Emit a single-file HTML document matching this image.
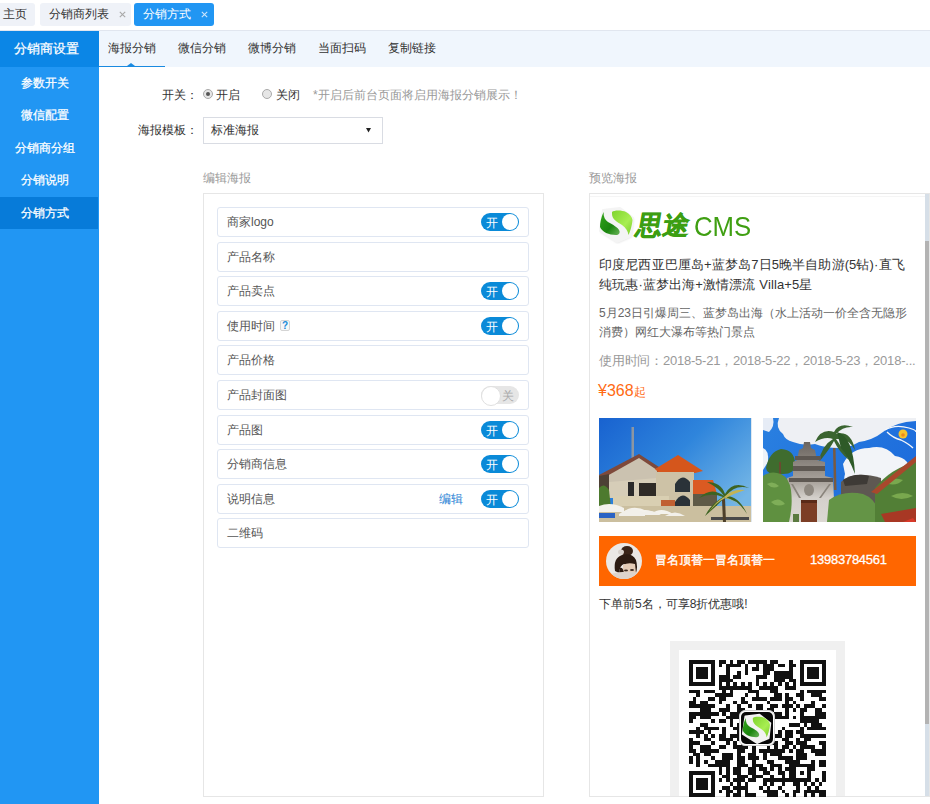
<!DOCTYPE html>
<html><head><meta charset="utf-8">
<style>
*{box-sizing:border-box;margin:0;padding:0}
html,body{width:930px;height:804px;overflow:hidden;background:#fff;font-family:"Liberation Sans",sans-serif;color:#333}
.a{position:absolute;white-space:nowrap}
.tab{position:absolute;top:3px;height:23px;border-radius:3px;background:#eff2f8;font-size:12px;line-height:23px;color:#333}
.tab .x{position:absolute;top:0;font-size:11px;color:#aaa}
.side{position:absolute;left:0;top:31px;width:99px;height:773px;background:#2196f3}
.sh{position:absolute;left:0;top:0;width:99px;padding-right:7px;height:36px;background:#0b86e6;color:#fff;font-size:13px;line-height:36px;text-align:center;-webkit-text-stroke:0.25px #fff}
.si{position:absolute;left:0;width:99px;padding-right:9px;height:32px;color:#fff;font-size:12px;line-height:32px;text-align:center;-webkit-text-stroke:0.25px #fff}
.nav{position:absolute;left:99px;top:31px;width:831px;height:36px;background:#f0f6fd}
.nt{position:absolute;top:0;height:36px;line-height:35px;font-size:12px;color:#333}
.row{position:absolute;left:217px;width:312px;height:30px;border:1px solid #dfe6f2;border-radius:3px;font-size:12px;line-height:28px;color:#555;padding-left:9px}
.sw{position:absolute;left:263px;top:5px;width:38px;height:18px;border-radius:9px;background:#0a8ad8}
.sw:after{content:"";position:absolute;right:1px;top:1px;width:16px;height:16px;border-radius:50%;background:#fff}
.sw span{position:absolute;left:5px;top:1px;line-height:18px;font-size:12px;color:#fff}
.sw.off{background:#e6e6e6}
.sw.off:after{left:0;right:auto;top:0;width:18px;height:18px;border:1px solid #e0e0e0}
.sw.off span{left:auto;right:5px;color:#aaa}
</style></head><body>
<!-- top tabs -->
<div style="position:absolute;left:0;top:30px;width:930px;height:1px;background:#e1e6ef"></div>
<div class="tab" style="left:-6px;width:41px;padding-left:9px">主页</div>
<div class="tab" style="left:40px;width:91px;padding-left:9px">分销商列表<svg style="position:absolute;left:79px;top:8px" width="7" height="7" viewBox="0 0 7 7"><path d="M0.8 0.8L6.2 6.2M6.2 0.8L0.8 6.2" stroke="#a8a8a8" stroke-width="1.1"/></svg></div>
<div class="tab" style="left:134px;width:80px;padding-left:9px;background:#2196f3;color:#fff">分销方式<svg style="position:absolute;left:67px;top:8px" width="7" height="7" viewBox="0 0 7 7"><path d="M0.8 0.8L6.2 6.2M6.2 0.8L0.8 6.2" stroke="#cde5fb" stroke-width="1.1"/></svg></div>
<!-- sidebar -->
<div class="side">
 <div class="sh">分销商设置</div>
 <div class="si" style="top:36px">参数开关</div>
 <div class="si" style="top:68px">微信配置</div>
 <div class="si" style="top:101px">分销商分组</div>
 <div class="si" style="top:133px">分销说明</div>
 <div class="si" style="top:166px;width:98px;padding-right:8px;background:#077bd9">分销方式</div>
</div>
<!-- nav -->
<div class="nav">
 <div class="nt" style="left:9px">海报分销</div>
 <div style="position:absolute;left:0;top:35px;width:66px;height:1px;background:#1a8ae0"></div>
 <div style="position:absolute;left:28px;top:32px;width:0;height:0;border-left:4px solid transparent;border-right:4px solid transparent;border-bottom:3px solid #1a8ae0"></div>
 <div class="nt" style="left:79px">微信分销</div>
 <div class="nt" style="left:149px">微博分销</div>
 <div class="nt" style="left:219px">当面扫码</div>
 <div class="nt" style="left:289px">复制链接</div>
</div>
<!-- form -->
<div class="a" style="left:162px;top:88px;font-size:12px;line-height:14px">开关：</div>
<div class="a" style="left:203px;top:89px;width:10px;height:10px;border:1px solid #aaa;border-radius:50%;background:#e6e6e6"><div style="position:absolute;left:2px;top:2px;width:4px;height:4px;border-radius:50%;background:#555"></div></div>
<div class="a" style="left:216px;top:88px;font-size:12px;line-height:14px">开启</div>
<div class="a" style="left:262px;top:89px;width:10px;height:10px;border:1px solid #aaa;border-radius:50%;background:#e6e6e6"></div>
<div class="a" style="left:276px;top:88px;font-size:12px;line-height:14px">关闭</div>
<div class="a" style="left:313px;top:88px;font-size:12px;line-height:14px;color:#999">*开启后前台页面将启用海报分销展示！</div>
<div class="a" style="left:138px;top:123px;font-size:12px;line-height:14px">海报模板：</div>
<div class="a" style="left:203px;top:117px;width:180px;height:27px;border:1px solid #d9dce3;font-size:12px;line-height:25px;padding-left:7px">标准海报<svg style="position:absolute;left:162px;top:10px" width="5" height="5" viewBox="0 0 5 5"><path d="M0 0H5L2.5 4.5Z" fill="#222"/></svg></div>
<div class="a" style="left:203px;top:171px;font-size:12px;line-height:14px;color:#999">编辑海报</div>
<div class="a" style="left:589px;top:171px;font-size:12px;line-height:14px;color:#999">预览海报</div>
<!-- edit panel -->
<div class="a" style="left:203px;top:193px;width:341px;height:604px;border:1px solid #e6e6e6"></div>
<div class="row" style="top:207px">商家logo<div class="sw"><span>开</span></div></div>
<div class="row" style="top:242px">产品名称</div>
<div class="row" style="top:276px">产品卖点<div class="sw"><span>开</span></div></div>
<div class="row" style="top:311px">使用时间<span style="position:absolute;left:62px;top:8px;width:10px;height:11px;border:1px solid #d4d4d4;border-radius:2px;background:#f7f7f7;font-size:10px;line-height:9px;text-align:center;color:#1a8ad8;font-weight:bold">?</span><div class="sw"><span>开</span></div></div>
<div class="row" style="top:345px">产品价格</div>
<div class="row" style="top:380px">产品封面图<div class="sw off"><span>关</span></div></div>
<div class="row" style="top:415px">产品图<div class="sw"><span>开</span></div></div>
<div class="row" style="top:449px">分销商信息<div class="sw"><span>开</span></div></div>
<div class="row" style="top:484px">说明信息<span style="position:absolute;left:221px;color:#1e7fd4">编辑</span><div class="sw"><span>开</span></div></div>
<div class="row" style="top:518px">二维码</div>
<!-- preview panel -->
<div class="a" style="left:589px;top:193px;width:341px;height:604px;border:1px solid #e6e6e6"></div>
<div class="a" style="left:590px;top:196px;width:335px;height:1px;background:#f5f5f5"></div>
<div class="a" style="left:925px;top:194px;width:4px;height:602px;background:#d6dfe8"><div style="position:absolute;left:0;top:47px;width:4px;height:483px;background:#b3b3b3"></div></div>

<!-- preview content -->
<svg class="a" style="left:596px;top:204px" width="42" height="40" viewBox="0 0 42 40">
 <defs>
  <linearGradient id="dg" x1="0" y1="0" x2="1" y2="1"><stop offset="0" stop-color="#34a51c"/><stop offset="0.6" stop-color="#1b850f"/><stop offset="1" stop-color="#6ab45a"/></linearGradient>
  <linearGradient id="lg" x1="0" y1="0" x2="1" y2="1"><stop offset="0" stop-color="#7fd42e"/><stop offset="0.6" stop-color="#a8ee52"/><stop offset="1" stop-color="#79cc2a"/></linearGradient>
  <filter id="sh" x="-20%" y="-20%" width="140%" height="140%"><feGaussianBlur stdDeviation="1"/></filter>
 </defs>
 <path d="M7 6 L24 4 L37 14 L35 32 L21 38 L4 27 Z" fill="#dcdcdc" filter="url(#sh)" transform="translate(0.5,1)"/>
 <path d="M7 6 L24 4 L37 14 L35 32 L21 38 L4 27 Z" fill="#f4f4f4" stroke="#f4f4f4" stroke-width="2" stroke-linejoin="round"/>
 <path d="M7.5 8 C5 14 4 19 4 23 C6 28 13 31 20 31 C23 31 24 29 23.5 27 C22 23 17 21 12 18 C9 16 7.5 13 7.5 8 Z" fill="url(#dg)"/>
 <path d="M16 8 C18 6 26 6 30 8 C34 10 36 13 36.5 16 C36 22 34 28 32.5 31 C32 27 30 24 26 21 C21 18 16 15 16 10 Z" fill="url(#lg)"/>
</svg>
<div class="a" style="left:634px;top:208px;font-size:26px;line-height:34px;color:#3c9e12;font-weight:bold;-webkit-text-stroke:0.6px #3c9e12;transform:skewX(-10deg);transform-origin:0 100%;letter-spacing:1px">思途</div>
<div class="a" style="left:694px;top:210px;font-size:28px;line-height:34px;color:#3f9f12;transform:scaleX(0.92);transform-origin:0 0">CMS</div>
<div class="a" style="left:599px;top:255px;width:326px;font-size:13px;line-height:20px;color:#333;white-space:normal;letter-spacing:0.13px">印度尼西亚巴厘岛+蓝梦岛7日5晚半自助游(5钻)·直飞<br>纯玩惠·蓝梦出海+激情漂流 Villa+5星</div>
<div class="a" style="left:599px;top:304px;width:320px;font-size:12px;line-height:19px;color:#666;white-space:normal">5月23日引爆周三、蓝梦岛出海（水上活动一价全含无隐形<br>消费）网红大瀑布等热门景点</div>
<div class="a" style="left:599px;top:353px;font-size:13px;line-height:16px;color:#999;letter-spacing:-0.22px">使用时间：2018-5-21，2018-5-22，2018-5-23，2018-...</div>
<div class="a" style="left:598px;top:381px;font-size:16px;line-height:20px;color:#ff6a13">¥368<span style="font-size:12px">起</span></div>
<div class="a" style="left:599px;top:536px;width:317px;height:50px;background:#ff6600"></div>
<div class="a" style="left:606px;top:543px;width:36px;height:36px;border-radius:50%;background:#ebe8e5;overflow:hidden">
 <svg width="36" height="36" viewBox="0 0 36 36"><ellipse cx="21" cy="8" rx="6" ry="5" fill="#3a2418"/><ellipse cx="15" cy="9" rx="3" ry="2.5" fill="#d8d2cc"/><path d="M9 28 Q7 15 16 12 Q26 9 30 17 Q32 24 30 30 L25 30 Q24 22 18 21 Q14 22 13 30 Z" fill="#2c1b12"/><path d="M17 22 Q22 19 29 21 L30 30 L17 30 Z" fill="#e4cbb6"/><path d="M14 25 Q17 24 18 30 L13 30Z" fill="#2c1b12"/><ellipse cx="20" cy="27.5" rx="2" ry="1" fill="#3a2a22"/><ellipse cx="26" cy="27" rx="2" ry="1" fill="#3a2a22"/><path d="M5 31 Q18 27 33 30 L32 36 L5 36 Z" fill="#ddd3cb"/></svg>
</div>
<div class="a" style="left:655px;top:553px;font-size:12px;line-height:14px;color:#fff;-webkit-text-stroke:0.35px #fff">冒名顶替一冒名顶替一</div>
<div class="a" style="left:810px;top:552px;font-size:13px;line-height:16px;color:#fff;letter-spacing:-0.25px;-webkit-text-stroke:0.3px #fff">13983784561</div>
<div class="a" style="left:599px;top:596px;font-size:12px;line-height:16px;color:#333">下单前5名，可享8折优惠哦!</div>

<svg class="a" style="left:599px;top:418px" width="153" height="104" viewBox="0 0 153 104">
 <defs>
  <linearGradient id="sky1" x1="0" y1="0" x2="1" y2="0.7"><stop offset="0" stop-color="#1862d0"/><stop offset="0.5" stop-color="#2f85dc"/><stop offset="1" stop-color="#74b6e6"/></linearGradient>
  <filter id="bl" x="0" y="0" width="100%" height="100%"><feGaussianBlur stdDeviation="0.5"/></filter>
 </defs>
 <rect width="153" height="104" fill="url(#sky1)"/>
 <g filter="url(#bl)">
 <rect x="32.5" y="9" width="2.5" height="31" fill="#8c96a2"/>
 <path d="M0 57 L40 36 L60 49 L62 56 L0 62 Z" fill="#7e4a3a"/>
 <path d="M8 58 L40 40 L58 52 L60 80 L8 80 Z" fill="#cbc2b0"/>
 <path d="M10 64 L58 60 L60 80 L10 80 Z" fill="#d6cdb8"/>
 <path d="M0 58 L10 56 L10 80 L0 80 Z" fill="#4e4034"/>
 <rect x="29" y="64" width="6" height="14" fill="#2a2a2a"/>
 <rect x="40" y="65" width="18" height="14" fill="#2e2c28"/>
 <path d="M56 51 L79 37 L104 53 L96 55 L60 55 Z" fill="#d5561f"/>
 <rect x="57" y="54" width="38" height="37" fill="#cdc2a6"/>
 <path d="M76 66 Q83 54 91 64 L91 74 L76 74 Z" fill="#2a3338"/>
 <path d="M76 84 Q83 72 91 82 L91 90 L76 90 Z" fill="#2a3338"/>
 <path d="M94 62 L114 62 L118 76 L94 77 Z" fill="#db5a22"/>
 <rect x="94" y="76" width="24" height="16" fill="#5f5a46"/>
 <path d="M0 70 Q5 64 10 72 L12 90 L0 90 Z" fill="#4e7a2e"/>
 <rect x="14" y="78" width="56" height="10" fill="#d9cfb2"/>
 <rect x="62" y="82" width="14" height="10" fill="#c06030"/>
 <rect x="0" y="88" width="153" height="16" fill="#cbbf9f"/>
 <path d="M0 94 Q10 84 24 92 Z M24 94 Q34 86 48 93 Z M36 96 Q46 88 58 96 Z M52 96 Q62 88 74 96 Z" fill="#f4f2ec"/>
 <path d="M0 94 L25 94 L25 90 Q12 83 0 88 Z" fill="#f4f2ec"/>
 <path d="M20 96 Q32 87 46 95 L46 98 L20 98 Z" fill="#f2f0ea"/>
 <path d="M40 97 Q50 89 62 97 Z" fill="#f2f0ea"/>
 <path d="M66 98 Q76 91 86 98 Z" fill="#f2f0ea"/>
 <rect x="0" y="95" width="16" height="5" fill="#2c64c4"/>
 <rect x="112" y="99" width="38" height="3" fill="#4a4a48"/>
 <path d="M124 104 L123 82 L126 80 L127 104 Z" fill="#4d3f2c"/>
 <path d="M125 78 Q112 68 100 80 Q112 74 124 79 Q112 86 106 98 Q120 86 125 80 Q138 80 148 96 Q140 78 127 78 Q136 66 150 70 Q134 62 126 76 Q122 64 108 64 Q120 70 125 78Z" fill="#3e6424"/>
 <path d="M125 79 Q134 70 146 72 Q136 75 127 80 Z M125 79 Q116 84 110 94 Q118 84 126 80Z M126 79 Q136 82 144 92 Q136 82 126 80Z" fill="#c4b456"/>
 <rect x="152" y="0" width="1" height="104" fill="#dfe8f0"/>
 </g>
</svg>
<svg class="a" style="left:763px;top:418px" width="153" height="104" viewBox="0 0 153 104">
 <defs>
  <linearGradient id="sky2" x1="0" y1="0" x2="1" y2="0.5"><stop offset="0" stop-color="#2a80e0"/><stop offset="1" stop-color="#1d6cdc"/></linearGradient>
  <linearGradient id="tmp" x1="0" y1="0" x2="0" y2="1"><stop offset="0" stop-color="#6a645e"/><stop offset="0.5" stop-color="#aaa49d"/><stop offset="0.7" stop-color="#d4d0cb"/><stop offset="1" stop-color="#dcd8d3"/></linearGradient>
 </defs>
 <rect width="153" height="104" fill="url(#sky2)"/>
 <path d="M16 0 L153 0 L153 3 Q132 4 120 14 Q110 22 96 24 Q86 30 76 30 Q62 30 52 26 Q40 28 30 24 Q22 22 20 16 Q12 10 16 0 Z" fill="#eef0f4"/>
 <path d="M0 0 L10 0 Q12 8 6 14 L0 12 Z" fill="#e6ecf6"/>
 <path d="M80 46 Q88 30 106 30 Q122 26 132 38 Q148 40 146 56 Q152 64 140 72 L96 76 Q78 68 82 56 Z" fill="#f2f4f8"/>
 <path d="M0 30 Q6 32 5 44 L0 52 Z" fill="#eef2f8"/>
 <path d="M122 12 Q132 6 146 10 Q153 12 153 14 M124 14 Q130 20 138 22 Q146 26 150 30" fill="none" stroke="#f4f6fa" stroke-width="1.3"/>
 <circle cx="140" cy="16" r="4.5" fill="#f8c22c"/>
 <circle cx="140" cy="17" r="1.8" fill="#f08a1a"/>
 <path d="M3 50 Q6 34 18 31 Q32 32 32 46 Q32 56 20 56 Q4 58 3 50 Z" fill="#3f6c2e"/>
 <rect x="16" y="44" width="2" height="28" fill="#6a4a30"/>
 <path d="M70 30 L71 72 L73.5 72 L72.5 30 Z" fill="#7a5a40"/>
 <path d="M71 14 Q58 10 52 24 Q62 18 70 21 Q58 28 56 44 Q66 32 71 23 Q76 34 86 42 Q78 28 73 21 Q86 20 92 32 Q88 12 73 16 Q80 8 90 9 Q76 4 71 14 Z" fill="#3a6430"/>
 <path d="M74 14 Q90 18 92 56 Q86 40 78 30 Z" fill="#2e5a28"/>
 <path d="M24 104 L24 60 L30 58 L30 44 L34 42 L36 32 L40 30 L41 24 L47 24 L48 30 L52 32 L54 42 L62 44 L62 58 L70 60 L72 104 Z" fill="url(#tmp)"/>
 <path d="M32 38 L58 38 L58 42 L32 42 Z M30 48 L62 48 L62 53 L30 53 Z M26 60 L70 60 L70 64 L26 64 Z" fill="#5e5852"/>
 <ellipse cx="46" cy="72" rx="5" ry="6" fill="#8e8880"/>
 <path d="M28 66 L36 80 L38 80 L30 66 Z M68 66 L58 80 L56 80 L66 66Z" fill="#8a847c"/>
 <rect x="38" y="82" width="16" height="22" fill="#7c3e26"/>
 <rect x="38" y="82" width="16" height="3" fill="#5a2a18"/>
 <rect x="30" y="96" width="6" height="8" fill="#5a7a40"/>
 <path d="M0 104 L0 58 Q8 52 18 56 Q26 60 28 72 Q30 88 26 104 Z" fill="#5f9040"/>
 <path d="M4 66 Q10 62 16 68 Q10 72 4 66Z M8 84 Q16 78 22 86 Q14 90 8 84Z" fill="#7fae58"/>
 <path d="M78 104 L78 64 Q90 52 118 60 L120 104 Z" fill="#5e5852"/>
 <path d="M80 62 Q92 54 106 58 L104 66 L82 68Z" fill="#3e3a36"/>
 <path d="M64 104 L66 82 Q80 72 100 76 Q116 82 118 104 Z" fill="#649446"/>
 <path d="M112 104 L112 70 Q128 50 153 44 L153 104 Z" fill="#527f36"/>
 <path d="M120 64 Q130 58 140 62 Q132 70 120 64Z M128 78 Q140 72 150 78 Q138 84 128 78Z" fill="#79a84e"/>
 <path d="M108 74 L153 38 L153 44 L114 76 Z" fill="#a8482c"/>
 <path d="M118 96 L153 90 L153 104 L122 104 Z" fill="#a83824"/>
 <path d="M140 104 L150 100 L153 104Z" fill="#d83a2a"/>
</svg>
<!-- QR -->
<div class="a" style="left:670px;top:641px;width:175px;height:155px;background:#f0f0f0"></div>
<div class="a" style="left:679px;top:650px;width:157px;height:146px;background:#fff"></div>
<svg class="a" style="left:689px;top:660px" width="137" height="137" viewBox="0 0 37 37" shape-rendering="crispEdges"><path d="M0 0h7v1h-7zM8 0h2v1h-2zM11 0h1v1h-1zM13 0h2v1h-2zM16 0h5v1h-5zM22 0h2v1h-2zM27 0h1v1h-1zM30 0h7v1h-7zM0 1h1v1h-1zM6 1h1v1h-1zM8 1h1v1h-1zM10 1h4v1h-4zM15 1h1v1h-1zM18 1h1v1h-1zM20 1h3v1h-3zM24 1h2v1h-2zM27 1h2v1h-2zM30 1h1v1h-1zM36 1h1v1h-1zM0 2h1v1h-1zM2 2h3v1h-3zM6 2h1v1h-1zM10 2h1v1h-1zM15 2h1v1h-1zM17 2h2v1h-2zM20 2h3v1h-3zM27 2h1v1h-1zM30 2h1v1h-1zM32 2h3v1h-3zM36 2h1v1h-1zM0 3h1v1h-1zM2 3h3v1h-3zM6 3h1v1h-1zM10 3h1v1h-1zM13 3h1v1h-1zM15 3h1v1h-1zM20 3h2v1h-2zM23 3h5v1h-5zM30 3h1v1h-1zM32 3h3v1h-3zM36 3h1v1h-1zM0 4h1v1h-1zM2 4h3v1h-3zM6 4h1v1h-1zM8 4h3v1h-3zM12 4h2v1h-2zM18 4h3v1h-3zM23 4h5v1h-5zM30 4h1v1h-1zM32 4h3v1h-3zM36 4h1v1h-1zM0 5h1v1h-1zM6 5h1v1h-1zM8 5h4v1h-4zM18 5h1v1h-1zM23 5h3v1h-3zM27 5h2v1h-2zM30 5h1v1h-1zM36 5h1v1h-1zM0 6h7v1h-7zM8 6h1v1h-1zM10 6h1v1h-1zM12 6h1v1h-1zM14 6h1v1h-1zM16 6h1v1h-1zM18 6h1v1h-1zM20 6h1v1h-1zM22 6h1v1h-1zM24 6h1v1h-1zM26 6h1v1h-1zM28 6h1v1h-1zM30 6h7v1h-7zM8 7h9v1h-9zM19 7h5v1h-5zM26 7h3v1h-3zM0 8h3v1h-3zM4 8h3v1h-3zM9 8h1v1h-1zM11 8h1v1h-1zM16 8h3v1h-3zM22 8h2v1h-2zM30 8h1v1h-1zM32 8h5v1h-5zM2 9h1v1h-1zM7 9h5v1h-5zM15 9h1v1h-1zM18 9h1v1h-1zM23 9h2v1h-2zM26 9h1v1h-1zM29 9h2v1h-2zM33 9h3v1h-3zM1 10h1v1h-1zM5 10h2v1h-2zM8 10h2v1h-2zM14 10h1v1h-1zM17 10h4v1h-4zM22 10h3v1h-3zM26 10h2v1h-2zM30 10h1v1h-1zM35 10h2v1h-2zM0 11h2v1h-2zM3 11h2v1h-2zM8 11h1v1h-1zM12 11h1v1h-1zM14 11h2v1h-2zM21 11h1v1h-1zM26 11h1v1h-1zM28 11h1v1h-1zM33 11h1v1h-1zM0 12h7v1h-7zM10 12h1v1h-1zM13 12h1v1h-1zM16 12h1v1h-1zM18 12h2v1h-2zM22 12h2v1h-2zM25 12h3v1h-3zM29 12h1v1h-1zM31 12h3v1h-3zM36 12h1v1h-1zM3 13h3v1h-3zM8 13h3v1h-3zM13 13h2v1h-2zM18 13h2v1h-2zM21 13h2v1h-2zM26 13h1v1h-1zM28 13h1v1h-1zM30 13h2v1h-2zM34 13h2v1h-2zM0 14h8v1h-8zM9 14h1v1h-1zM11 14h5v1h-5zM18 14h2v1h-2zM21 14h1v1h-1zM23 14h2v1h-2zM26 14h1v1h-1zM30 14h1v1h-1zM34 14h3v1h-3zM0 15h2v1h-2zM3 15h3v1h-3zM10 15h7v1h-7zM20 15h1v1h-1zM22 15h5v1h-5zM28 15h1v1h-1zM30 15h7v1h-7zM0 16h1v1h-1zM6 16h1v1h-1zM8 16h2v1h-2zM11 16h1v1h-1zM14 16h1v1h-1zM20 16h1v1h-1zM30 16h5v1h-5zM3 17h2v1h-2zM11 17h1v1h-1zM13 17h3v1h-3zM17 17h1v1h-1zM20 17h3v1h-3zM27 17h3v1h-3zM31 17h1v1h-1zM33 17h3v1h-3zM2 18h1v1h-1zM4 18h4v1h-4zM9 18h1v1h-1zM12 18h2v1h-2zM16 18h3v1h-3zM20 18h1v1h-1zM22 18h1v1h-1zM25 18h1v1h-1zM30 18h1v1h-1zM32 18h5v1h-5zM0 19h4v1h-4zM5 19h1v1h-1zM9 19h1v1h-1zM13 19h3v1h-3zM18 19h5v1h-5zM24 19h1v1h-1zM26 19h2v1h-2zM29 19h2v1h-2zM2 20h1v1h-1zM4 20h1v1h-1zM6 20h1v1h-1zM8 20h2v1h-2zM11 20h4v1h-4zM17 20h1v1h-1zM19 20h1v1h-1zM21 20h4v1h-4zM26 20h2v1h-2zM30 20h7v1h-7zM0 21h1v1h-1zM4 21h2v1h-2zM8 21h4v1h-4zM13 21h1v1h-1zM17 21h5v1h-5zM25 21h2v1h-2zM29 21h1v1h-1zM31 21h2v1h-2zM0 22h3v1h-3zM6 22h1v1h-1zM10 22h1v1h-1zM12 22h1v1h-1zM14 22h1v1h-1zM17 22h3v1h-3zM22 22h2v1h-2zM26 22h2v1h-2zM29 22h3v1h-3zM35 22h2v1h-2zM0 23h1v1h-1zM3 23h3v1h-3zM8 23h2v1h-2zM12 23h4v1h-4zM17 23h1v1h-1zM21 23h1v1h-1zM23 23h1v1h-1zM25 23h2v1h-2zM28 23h1v1h-1zM30 23h4v1h-4zM36 23h1v1h-1zM0 24h2v1h-2zM3 24h5v1h-5zM13 24h2v1h-2zM17 24h1v1h-1zM19 24h7v1h-7zM27 24h1v1h-1zM29 24h2v1h-2zM33 24h4v1h-4zM1 25h2v1h-2zM4 25h2v1h-2zM9 25h3v1h-3zM13 25h1v1h-1zM16 25h2v1h-2zM20 25h1v1h-1zM22 25h3v1h-3zM29 25h3v1h-3zM34 25h3v1h-3zM0 26h1v1h-1zM2 26h1v1h-1zM6 26h1v1h-1zM9 26h3v1h-3zM13 26h2v1h-2zM16 26h3v1h-3zM20 26h1v1h-1zM24 26h4v1h-4zM29 26h3v1h-3zM0 27h1v1h-1zM2 27h1v1h-1zM4 27h1v1h-1zM7 27h4v1h-4zM13 27h2v1h-2zM17 27h1v1h-1zM21 27h2v1h-2zM26 27h4v1h-4zM33 27h1v1h-1zM35 27h2v1h-2zM2 28h1v1h-1zM5 28h6v1h-6zM13 28h3v1h-3zM17 28h3v1h-3zM22 28h3v1h-3zM27 28h7v1h-7zM35 28h2v1h-2zM8 29h1v1h-1zM10 29h1v1h-1zM12 29h2v1h-2zM16 29h2v1h-2zM19 29h2v1h-2zM22 29h1v1h-1zM24 29h1v1h-1zM26 29h3v1h-3zM32 29h2v1h-2zM0 30h7v1h-7zM8 30h1v1h-1zM10 30h1v1h-1zM12 30h2v1h-2zM16 30h2v1h-2zM20 30h2v1h-2zM24 30h2v1h-2zM27 30h2v1h-2zM30 30h1v1h-1zM32 30h1v1h-1zM36 30h1v1h-1zM0 31h1v1h-1zM6 31h1v1h-1zM9 31h2v1h-2zM13 31h3v1h-3zM17 31h3v1h-3zM22 31h1v1h-1zM25 31h1v1h-1zM27 31h2v1h-2zM32 31h1v1h-1zM36 31h1v1h-1zM0 32h1v1h-1zM2 32h3v1h-3zM6 32h1v1h-1zM8 32h1v1h-1zM10 32h1v1h-1zM12 32h3v1h-3zM16 32h2v1h-2zM20 32h13v1h-13zM34 32h1v1h-1zM36 32h1v1h-1zM0 33h1v1h-1zM2 33h3v1h-3zM6 33h1v1h-1zM11 33h1v1h-1zM13 33h1v1h-1zM15 33h1v1h-1zM20 33h1v1h-1zM22 33h1v1h-1zM25 33h1v1h-1zM28 33h2v1h-2zM31 33h1v1h-1zM33 33h1v1h-1zM35 33h1v1h-1zM0 34h1v1h-1zM2 34h3v1h-3zM6 34h1v1h-1zM9 34h2v1h-2zM12 34h4v1h-4zM19 34h1v1h-1zM21 34h1v1h-1zM24 34h1v1h-1zM29 34h1v1h-1zM32 34h1v1h-1zM34 34h1v1h-1zM0 35h1v1h-1zM6 35h1v1h-1zM8 35h1v1h-1zM10 35h2v1h-2zM13 35h1v1h-1zM15 35h1v1h-1zM20 35h4v1h-4zM25 35h1v1h-1zM28 35h2v1h-2zM31 35h6v1h-6zM0 36h7v1h-7zM10 36h1v1h-1zM12 36h2v1h-2zM15 36h3v1h-3zM21 36h3v1h-3zM26 36h1v1h-1zM28 36h1v1h-1zM31 36h1v1h-1zM33 36h1v1h-1zM35 36h2v1h-2z" fill="#111"/></svg>
<div class="a" style="left:739px;top:710px;width:36px;height:36px;border-radius:6px;background:#fff;border:1px solid #d0d0d0"></div>
<div class="a" style="left:741px;top:712px;width:32px;height:32px;border-radius:5px;background:#080808"></div>
<svg class="a" style="left:741px;top:713px" width="32" height="31" viewBox="2 2 38 37">
 <path d="M7 6 L24 4 L37 14 L35 32 L21 38 L4 27 Z" fill="#f2f2f2" stroke="#f2f2f2" stroke-width="2" stroke-linejoin="round"/>
 <path d="M7.5 8 C5 14 4 19 4 23 C6 28 13 31 20 31 C23 31 24 29 23.5 27 C22 23 17 21 12 18 C9 16 7.5 13 7.5 8 Z" fill="url(#dg)"/>
 <path d="M16 8 C18 6 26 6 30 8 C34 10 36 13 36.5 16 C36 22 34 28 32.5 31 C32 27 30 24 26 21 C21 18 16 15 16 10 Z" fill="url(#lg)"/>
</svg>
</body></html>
